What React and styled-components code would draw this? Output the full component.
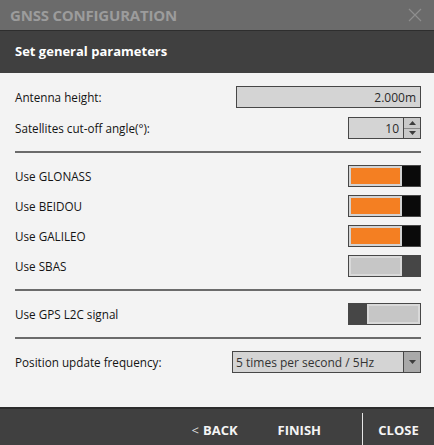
import styled, { createGlobalStyle } from "styled-components";

const GlobalStyle = createGlobalStyle`
  html, body {
    margin: 0;
    padding: 0;
    background: #f3f3f3;
  }

  * {
    box-sizing: border-box;
  }
`;

function Toggle({ on, left }) {
  return (
    <Switch left={left}>
      <Track on={on} />
      <Knob on={on} />
    </Switch>
  );
}

export default function App() {
  return (
    <>
      <GlobalStyle />
      <Window>
        <TitleBar>
          <Title>GNSS CONFIGURATION</Title>
          <CloseIcon width="14" height="14" viewBox="0 0 14 14">
            <path d="M1 1 L13 13 M13 1 L1 13" stroke="#8e8e8e" strokeWidth="1.2" />
          </CloseIcon>
        </TitleBar>

        <Header>Set general parameters</Header>

        <Body>
          <Section first>
            <Row>
              <Label>Antenna height:</Label>
              <TextInput>2.000m</TextInput>
            </Row>
            <Row>
              <Label>Satellites cut-off angle(°):</Label>
              <Spinner>
                <SpinValue>10</SpinValue>
                <SpinButtons>
                  <SpinButton>
                    <svg width="7" height="4" viewBox="0 0 7 4">
                      <path d="M0 4 L3.5 0 L7 4 Z" fill="#3c3c3c" />
                    </svg>
                  </SpinButton>
                  <SpinButton>
                    <svg width="7" height="4" viewBox="0 0 7 4">
                      <path d="M0 0 L3.5 4 L7 0 Z" fill="#3c3c3c" />
                    </svg>
                  </SpinButton>
                </SpinButtons>
              </Spinner>
            </Row>
          </Section>

          <Section>
            <Row>
              <Label>Use GLONASS</Label>
              <Toggle on />
            </Row>
            <Row>
              <Label>Use BEIDOU</Label>
              <Toggle on />
            </Row>
            <Row>
              <Label>Use GALILEO</Label>
              <Toggle on />
            </Row>
            <Row>
              <Label>Use SBAS</Label>
              <Toggle />
            </Row>
          </Section>

          <Section>
            <Row>
              <Label>Use GPS L2C signal</Label>
              <Toggle left />
            </Row>
          </Section>

          <Section>
            <Row>
              <Label>Position update frequency:</Label>
              <Select>
                <SelectValue>5 times per second / 5Hz</SelectValue>
                <SelectArrow>
                  <svg width="7" height="4" viewBox="0 0 7 4">
                    <path d="M0 0 L3.5 4 L7 0 Z" fill="#3c3c3c" />
                  </svg>
                </SelectArrow>
              </Select>
            </Row>
          </Section>
        </Body>

        <Footer>
          <FooterButton>
            <Chevron>&lt;</Chevron> BACK
          </FooterButton>
          <FooterButton gapRight>FINISH</FooterButton>
          <CloseButton>CLOSE</CloseButton>
        </Footer>
      </Window>
    </>
  );
}

const Window = styled.div`
  display: flex;
  flex-direction: column;

  width: 434px;
  height: 445px;

  font-family: "Open Sans", "Noto Sans", sans-serif;
`;

const TitleBar = styled.div`
  height: 31px;

  display: flex;
  align-items: center;
  justify-content: space-between;

  padding: 0 12px 0 10px;

  background: #6b6b6b;

  border-bottom: 1px solid #2e2e2e;
`;

const Title = styled.div`
  font-size: 15px;
  font-weight: 700;

  color: #9c9c9c;

  letter-spacing: -0.2px;
`;

const CloseIcon = styled.svg`
  display: block;
`;

const Header = styled.div`
  height: 42px;

  display: flex;
  align-items: center;

  padding: 0 15px 2px;

  background: #404040;

  color: #ffffff;

  font-size: 13px;
  font-weight: 700;
`;

const Body = styled.div`
  flex: 1;

  padding: 0 13px 0 15px;

  background: #f3f3f3;
`;

const Section = styled.div`
  display: flex;
  flex-direction: column;
  gap: ${({ first }) => (first ? "9px" : "8px")};

  padding: ${({ first }) => (first ? "13px 0 12px" : "12px 0")};

  border-top: ${({ first }) => (first ? "none" : "2px solid #6b6b6b")};
`;

const Row = styled.div`
  height: 22px;

  display: flex;
  align-items: center;
  justify-content: space-between;
`;

const Label = styled.div`
  font-size: 11.7px;

  color: #141414;
`;

const TextInput = styled.div`
  width: 185px;
  height: 22px;

  display: flex;
  align-items: center;
  justify-content: flex-end;

  padding: 0 4px;

  background: #d4d4d4;

  border: 1px solid #474747;

  font-size: 12px;

  color: #2a2a2a;
`;

const Spinner = styled.div`
  width: 73px;
  height: 22px;

  display: flex;

  background: #d4d4d4;

  border: 1px solid #474747;
`;

const SpinValue = styled.div`
  flex: 1;

  display: flex;
  align-items: center;
  justify-content: flex-end;

  padding: 0 4px;

  font-size: 12px;

  color: #2a2a2a;
`;

const SpinButtons = styled.div`
  width: 17px;

  display: flex;
  flex-direction: column;

  border-left: 1px solid #474747;
`;

const SpinButton = styled.div`
  flex: 1;

  display: flex;
  align-items: center;
  justify-content: center;

  background: #c9c9c9;

  & + & {
    border-top: 1px solid #8a8a8a;
  }
`;

const Switch = styled.div`
  width: 73px;
  height: 22px;

  display: flex;
  flex-direction: ${({ left }) => (left ? "row-reverse" : "row")};

  border: 1px solid #474747;
`;

const Track = styled.div`
  flex: 1;

  background: ${({ on }) => (on ? "#f47f22" : "#c6c6c6")};

  border: 2px solid ${({ on }) => (on ? "#d2d2d2" : "#d9d9d9")};
`;

const Knob = styled.div`
  width: 18px;

  background: ${({ on }) => (on ? "#0a0a0a" : "#464646")};
`;

const Select = styled.div`
  width: 189px;
  height: 22px;

  display: flex;

  background: #d4d4d4;

  border: 1px solid #474747;
`;

const SelectValue = styled.div`
  flex: 1;

  display: flex;
  align-items: center;

  padding: 0 3px;

  font-size: 12px;

  color: #333333;
`;

const SelectArrow = styled.div`
  width: 17px;

  display: flex;
  align-items: center;
  justify-content: center;

  background: #a9a9a9;

  border-left: 1px solid #474747;
`;

const Footer = styled.div`
  height: 38px;

  display: flex;
  justify-content: flex-end;

  background: #404040;

  border-top: 2px solid #2c2c2c;
`;

const FooterButton = styled.div`
  display: flex;
  align-items: center;
  gap: 4px;

  padding: 6px 20px 0;

  margin-right: ${({ gapRight }) => (gapRight ? "21px" : "0")};

  color: #f4f4f4;

  font-size: 13px;
  font-weight: 700;
`;

const Chevron = styled.span`
  font-weight: 400;

  color: #dcdcdc;
`;

const CloseButton = styled(FooterButton)`
  width: 72px;

  justify-content: center;

  padding: 2px 0 0;

  margin-top: 4px;

  border-left: 1px solid #e6e6e6;
`;
